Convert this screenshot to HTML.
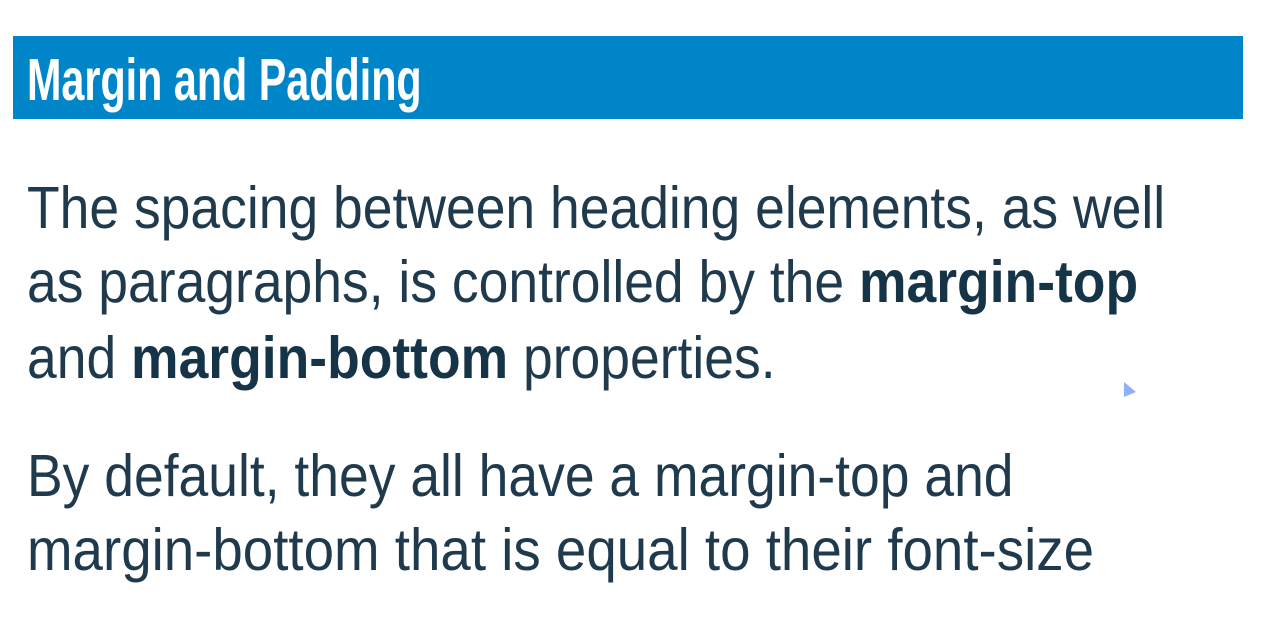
<!DOCTYPE html>
<html><head><meta charset="utf-8"><style>
html,body{margin:0;padding:0;background:#fff;width:1261px;height:634px;overflow:hidden}
.bar{position:absolute;left:13px;top:36px;width:1230px;height:83px;background:#0086c8}
.h{position:absolute;left:27px;top:80px;font-family:"Liberation Sans Narrow","Liberation Sans",sans-serif;font-stretch:condensed;font-weight:bold;font-size:59px;color:#fff;line-height:0;white-space:nowrap;transform-origin:left;transform:scaleX(0.70)}
.l{position:absolute;left:27px;font-family:"Liberation Sans",sans-serif;font-size:59px;color:#1f3a4d;line-height:0;white-space:nowrap;transform-origin:left;transform:scaleX(0.906)}
b{font-weight:bold;color:#163447}
</style></head><body>
<div class="bar"></div>
<div class="h">Margin and Padding</div>
<div class="l" style="top:208px">The spacing between heading elements, as well</div>
<div class="l" style="top:282px">as paragraphs, is controlled by the <b>margin-top</b></div>
<div class="l" style="top:358px">and <b>margin-bottom</b> properties.</div>
<div class="l" style="top:476px">By default, they all have a margin-top and</div>
<div class="l" style="top:550px;transform:scaleX(0.927)">margin-bottom that is equal to their font-size</div>
<svg style="position:absolute;left:1123px;top:381px" width="14" height="18"><path d="M1 1 L1 16 L13 11 Z" fill="#8fb0ff"/></svg>
</body></html>
